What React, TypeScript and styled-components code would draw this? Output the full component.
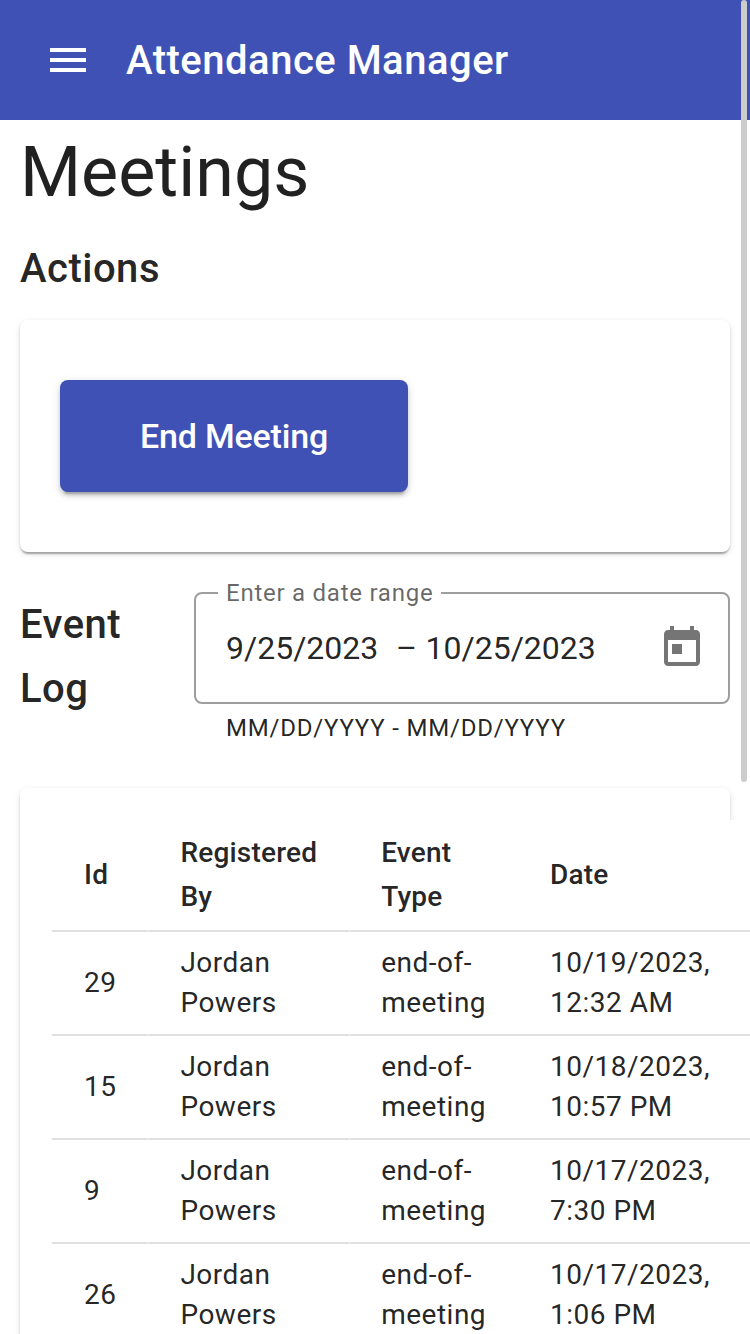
import React from 'react';
import styled, { createGlobalStyle } from 'styled-components';

const ink = 'rgba(0, 0, 0, 0.87)';
const primary = '#3f51b5';

const GlobalStyle = createGlobalStyle`
  * { box-sizing: border-box; }
  body {
    margin: 0;
    background: #fff;
    color: ${ink};
    font-family: Roboto, "Liberation Sans", sans-serif;
    -webkit-font-smoothing: antialiased;
  }
`;

const Page = styled.div`
  position: relative;
  width: 750px;
  height: 1334px;
  overflow: hidden;
`;

const Toolbar = styled.header`
  display: flex;
  align-items: center;
  height: 120px;
  padding: 0 20px;
  background: ${primary};
  color: #fff;
`;

const IconButton = styled.button<{ $size: number; $muted?: boolean }>`
  display: flex;
  align-items: center;
  justify-content: center;
  flex: none;
  width: ${({ $size }) => $size}px;
  height: ${({ $size }) => $size}px;
  padding: 0;
  border: 0;
  background: none;
  color: ${({ $muted }) => ($muted ? '#757575' : 'inherit')};

  svg {
    width: 48px;
    height: 48px;
    fill: currentColor;
  }
`;

const AppName = styled.span`
  margin-left: 10px;
  padding-top: 2px;
  font-size: 40px;
  font-weight: 500;
  line-height: 64px;
  letter-spacing: 0.5px;
`;

const Content = styled.main`
  padding: 0 20px;
`;

const Title = styled.h1`
  margin: 0;
  padding-top: 12px;
  font-size: 70px;
  font-weight: 400;
  line-height: 80px;
`;

const SectionTitle = styled.h2`
  margin: 0;
  font-size: 40px;
  font-weight: 500;
  line-height: 64px;
  letter-spacing: 0.5px;
`;

const ActionsTitle = styled(SectionTitle)`
  margin: 25px 0 19px;
`;

const Card = styled.section`
  border-radius: 8px;
  background: #fff;
  box-shadow:
    0 4px 2px -2px rgba(0, 0, 0, 0.2),
    0 2px 2px 0 rgba(0, 0, 0, 0.14),
    0 2px 6px 0 rgba(0, 0, 0, 0.12);
`;

const ActionsCard = styled(Card)`
  height: 232px;
  padding: 60px 40px;
`;

const RaisedButton = styled.button`
  height: 112px;
  width: 348px;
  padding: 0;
  border: 0;
  border-radius: 8px;
  background: ${primary};
  color: #fff;
  font: 500 34px/48px Roboto, "Liberation Sans", sans-serif;
  letter-spacing: -0.18px;
  box-shadow:
    0 6px 2px -4px rgba(0, 0, 0, 0.2),
    0 4px 4px 0 rgba(0, 0, 0, 0.14),
    0 2px 10px 0 rgba(0, 0, 0, 0.12);
`;

const LogHeader = styled.div`
  display: flex;
  justify-content: space-between;
  margin-top: 40px;
  height: 196px;
`;

const LogTitle = styled(SectionTitle)`
  width: 120px;
  padding-top: 1px;
`;

const Field = styled.div`
  width: 536px;
`;

const Outline = styled.div`
  position: relative;
  display: flex;
  align-items: center;
  justify-content: space-between;
  height: 112px;
  padding-left: 30px;
  border: 2px solid #9e9e9e;
  border-radius: 8px;
`;

const FieldLabel = styled.label`
  position: absolute;
  top: -17px;
  left: 22px;
  padding: 0 8px;
  background: #fff;
  color: rgba(0, 0, 0, 0.6);
  font-size: 24px;
  line-height: 32px;
  letter-spacing: 0.75px;
  white-space: nowrap;
`;

const Range = styled.div`
  display: flex;
  font-size: 32px;
  line-height: 48px;
`;

const StartDate = styled.span`
  width: 170px;
`;

const Dash = styled.span`
  width: 29.5px;
`;

const Hint = styled.div`
  padding: 8px 32px 0;
  font-size: 24px;
  line-height: 32px;
  letter-spacing: 0.8px;
`;

const TableCard = styled(Card)`
  height: 1000px;
  padding: 32px;
`;

const Table = styled.table`
  width: 760px;
  table-layout: fixed;
  border-collapse: separate;
  border-spacing: 0;
  background: #fff;
  font-size: 28px;

  /* faint seam in the divider between the first three columns */
  th:nth-child(2)::before,
  th:nth-child(3)::before,
  td:nth-child(2)::before,
  td:nth-child(3)::before {
    content: '';
    position: absolute;
    left: 0;
    bottom: -2px;
    width: 1px;
    height: 2px;
    background: #efefef;
  }
`;

const Column = styled.col<{ $width: number }>`
  width: ${({ $width }) => $width}px;
`;

const HeadCell = styled.th`
  position: relative;
  height: 112px;
  padding: 0 32px;
  border-bottom: 2px solid #e0e0e0;
  font-weight: 500;
  line-height: 44px;
  letter-spacing: 0.2px;
  text-align: left;
`;

const Cell = styled.td`
  position: relative;
  height: 104px;
  padding: 0 32px;
  border-bottom: 2px solid #e0e0e0;
  line-height: 40px;
  letter-spacing: 0.5px;
`;

const ScrollThumb = styled.div`
  position: absolute;
  top: 0;
  right: 3px;
  width: 6px;
  height: 782px;
  border-radius: 3px;
  background: #ccc;
`;

const columns = [
  { label: 'Id', width: 96.4 },
  { label: 'Registered By', width: 200.8 },
  { label: 'Event Type', width: 168.8 },
  { label: 'Date', width: 294 },
];

const events = [
  { id: 29, date: '10/19/2023,', time: '12:32 AM' },
  { id: 15, date: '10/18/2023,', time: '10:57 PM' },
  { id: 9, date: '10/17/2023,', time: '7:30 PM' },
  { id: 26, date: '10/17/2023,', time: '1:06 PM' },
];

export default function App() {
  return (
    <Page>
      <GlobalStyle />
      <Toolbar>
        <IconButton $size={96} aria-label="Menu">
          <svg viewBox="0 0 24 24">
            <path d="M3 18h18v-2H3v2zm0-5h18v-2H3v2zm0-7v2h18V6H3z" />
          </svg>
        </IconButton>
        <AppName>Attendance Manager</AppName>
      </Toolbar>
      <Content>
        <Title>Meetings</Title>
        <ActionsTitle>Actions</ActionsTitle>
        <ActionsCard>
          <RaisedButton>End Meeting</RaisedButton>
        </ActionsCard>
        <LogHeader>
          <LogTitle>Event Log</LogTitle>
          <Field>
            <Outline>
              <FieldLabel>Enter a date range</FieldLabel>
              <Range>
                <StartDate>9/25/2023</StartDate>
                <Dash>–</Dash>
                <span>10/25/2023</span>
              </Range>
              <IconButton $size={92} $muted aria-label="Open calendar">
                <svg viewBox="0 0 24 24">
                  <path d="M19 3h-1V1h-2v2H8V1H6v2H5c-1.110 0-1.990.9-1.990 2L3 19c0 1.100.890 2 2 2h14c1.100 0 2-.9 2-2V5c0-1.100-.9-2-2-2zm0 16H5V8h14v11zM7 10h5v5H7z" />
                </svg>
              </IconButton>
            </Outline>
            <Hint>MM/DD/YYYY - MM/DD/YYYY</Hint>
          </Field>
        </LogHeader>
        <TableCard>
          <Table>
            <colgroup>
              {columns.map((c) => (
                <Column key={c.label} $width={c.width} />
              ))}
            </colgroup>
            <thead>
              <tr>
                {columns.map((c) => (
                  <HeadCell key={c.label}>{c.label}</HeadCell>
                ))}
              </tr>
            </thead>
            <tbody>
              {events.map((e) => (
                <tr key={e.id}>
                  <Cell>{e.id}</Cell>
                  <Cell>Jordan<br />Powers</Cell>
                  <Cell>end-of-<br />meeting</Cell>
                  <Cell>{e.date}<br />{e.time}</Cell>
                </tr>
              ))}
            </tbody>
          </Table>
        </TableCard>
      </Content>
      <ScrollThumb />
    </Page>
  );
}
